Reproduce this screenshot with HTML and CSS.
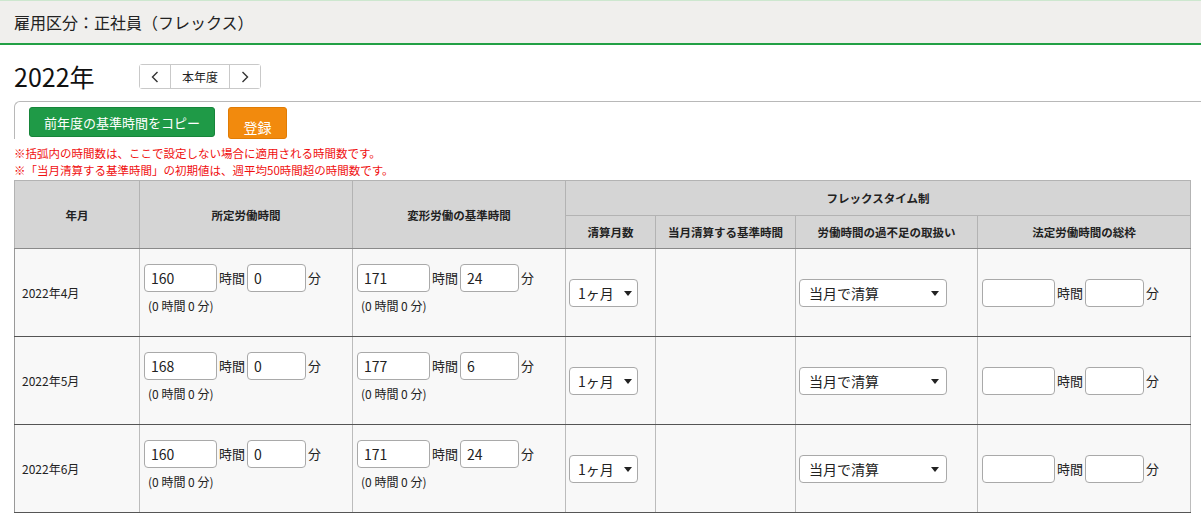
FILE: index.html
```html
<!DOCTYPE html>
<html lang="ja">
<head>
  <meta charset="UTF-8">
  <title>基準時間設定</title>
  <link rel="stylesheet" href="styles.css">
</head>
<body>
  <div class="page-head">
    <h1>雇用区分：正社員（フレックス）</h1>
  </div>

  <div class="year-bar">
    <div class="year-title">2022年</div>
    <div class="year-nav">
      <button class="nav-btn nav-arrow" type="button">
        <svg width="8" height="12" viewBox="0 0 8 12"><polyline points="6.5,1 1.5,6 6.5,11" fill="none" stroke="#333" stroke-width="1.4"/></svg>
      </button>
      <button class="nav-btn nav-current" type="button">本年度</button>
      <button class="nav-btn nav-arrow" type="button">
        <svg width="8" height="12" viewBox="0 0 8 12"><polyline points="1.5,1 6.5,6 1.5,11" fill="none" stroke="#333" stroke-width="1.4"/></svg>
      </button>
    </div>
  </div>

  <div class="panel">
    <button class="btn btn-copy" type="button">前年度の基準時間をコピー</button>
    <button class="btn btn-save" type="button">登録</button>
  </div>

  <div class="notes">
    ※括弧内の時間数は、ここで設定しない場合に適用される時間数です。<br>
    ※「当月清算する基準時間」の初期値は、週平均50時間超の時間数です。
  </div>

  <table class="hours-table">
    <colgroup>
      <col style="width:125px">
      <col style="width:213px">
      <col style="width:213px">
      <col style="width:90px">
      <col style="width:140px">
      <col style="width:182px">
      <col style="width:213px">
    </colgroup>
    <thead>
      <tr class="head-top">
        <th rowspan="2">年月</th>
        <th rowspan="2">所定労働時間</th>
        <th rowspan="2">変形労働の基準時間</th>
        <th colspan="4">フレックスタイム制</th>
      </tr>
      <tr class="head-sub">
        <th>清算月数</th>
        <th>当月清算する基準時間</th>
        <th>労働時間の過不足の取扱い</th>
        <th>法定労働時間の総枠</th>
      </tr>
    </thead>
    <tbody>
      <tr>
        <td class="month">2022年4月</td>
        <td>
          <div class="time-row"><input class="in-h" type="text" value="160"><span class="unit">時間</span><input class="in-m" type="text" value="0"><span class="unit">分</span></div>
          <div class="default">(0 時間 0 分)</div>
        </td>
        <td>
          <div class="time-row"><input class="in-h" type="text" value="171"><span class="unit">時間</span><input class="in-m" type="text" value="24"><span class="unit">分</span></div>
          <div class="default">(0 時間 0 分)</div>
        </td>
        <td class="pick"><span class="select select-months"><select><option>1ヶ月</option></select></span></td>
        <td></td>
        <td class="pick"><span class="select select-mode"><select><option>当月で清算</option></select></span></td>
        <td>
          <div class="time-row"><input class="in-h" type="text"><span class="unit">時間</span><input class="in-m" type="text"><span class="unit">分</span></div>
        </td>
      </tr>
      <tr>
        <td class="month">2022年5月</td>
        <td>
          <div class="time-row"><input class="in-h" type="text" value="168"><span class="unit">時間</span><input class="in-m" type="text" value="0"><span class="unit">分</span></div>
          <div class="default">(0 時間 0 分)</div>
        </td>
        <td>
          <div class="time-row"><input class="in-h" type="text" value="177"><span class="unit">時間</span><input class="in-m" type="text" value="6"><span class="unit">分</span></div>
          <div class="default">(0 時間 0 分)</div>
        </td>
        <td class="pick"><span class="select select-months"><select><option>1ヶ月</option></select></span></td>
        <td></td>
        <td class="pick"><span class="select select-mode"><select><option>当月で清算</option></select></span></td>
        <td>
          <div class="time-row"><input class="in-h" type="text"><span class="unit">時間</span><input class="in-m" type="text"><span class="unit">分</span></div>
        </td>
      </tr>
      <tr>
        <td class="month">2022年6月</td>
        <td>
          <div class="time-row"><input class="in-h" type="text" value="160"><span class="unit">時間</span><input class="in-m" type="text" value="0"><span class="unit">分</span></div>
          <div class="default">(0 時間 0 分)</div>
        </td>
        <td>
          <div class="time-row"><input class="in-h" type="text" value="171"><span class="unit">時間</span><input class="in-m" type="text" value="24"><span class="unit">分</span></div>
          <div class="default">(0 時間 0 分)</div>
        </td>
        <td class="pick"><span class="select select-months"><select><option>1ヶ月</option></select></span></td>
        <td></td>
        <td class="pick"><span class="select select-mode"><select><option>当月で清算</option></select></span></td>
        <td>
          <div class="time-row"><input class="in-h" type="text"><span class="unit">時間</span><input class="in-m" type="text"><span class="unit">分</span></div>
        </td>
      </tr>
    </tbody>
  </table>
</body>
</html>
```

FILE: styles.css
```css
body { margin: 0; background: #fff; color: #222; font-family: "Noto Sans CJK JP", "Noto Sans", sans-serif; overflow: hidden; }

/* page header */
.page-head { background: #f0efed; border-top: 1px solid #cde7cf; border-bottom: 2px solid #22a045; height: 42px; }
.page-head h1 { margin: 0; padding-left: 14px; font-size: 16px; font-weight: normal; line-height: 42px; color: #222; }

/* year + navigation */
.year-bar { display: flex; align-items: center; margin-top: 19px; padding-left: 14px; height: 25px; }
.year-title { width: 125px; font-size: 25px; line-height: 25px; color: #111; }
.year-nav { display: flex; border: 1px solid #c9c9c9; border-radius: 3px; height: 23px; }
.nav-btn { background: #fff; border: none; margin: 0; padding: 0; font-family: inherit; font-size: 12px; color: #222; display: flex; align-items: center; justify-content: center; cursor: pointer; }
.nav-arrow { width: 30px; }
.nav-current { width: 60px; border-left: 1px solid #c9c9c9; border-right: 1px solid #c9c9c9; }

/* action buttons */
.panel { margin: 12px 0 0 14px; border-top: 1px solid #b8b8b8; border-left: 1px solid #b8b8b8; border-top-left-radius: 6px; padding: 5px 0 0 14px; display: flex; align-items: flex-start; gap: 13px; }
.btn { border-radius: 3px; color: #fff; font-family: inherit; font-size: 13px; cursor: pointer; }
.btn-copy { background: #1f9a47; border: 1px solid #17853a; height: 30px; width: 186px; padding: 0; }
.btn-save { background: #f28a0d; border: 1px solid #e07c05; height: 32px; width: 59px; padding: 8px 0 0; line-height: 20px; font-size: 14px; }

.notes { margin: 6px 0 0 14px; color: #f01010; font-size: 11.5px; line-height: 17px; }

/* main table */
.hours-table { margin: 1px 0 0 14px; width: 1176px; table-layout: fixed; border-collapse: collapse; font-size: 12px; }
.hours-table th { background: #d5d5d5; border: 1px solid #b3b3b3; font-weight: bold; font-size: 11.5px; color: #222; padding: 0; }
.head-top th { height: 34px; }
.head-sub th { height: 32px; border-top-color: #e4e4e4; }
.hours-table thead tr:last-child th, .hours-table th[rowspan] { border-bottom-color: #8a8a8a; }
.hours-table td { background: #f8f8f8; border-left: 1px solid #bcbcbc; border-right: 1px solid #bcbcbc; border-bottom: 1px solid #555; height: 87px; padding: 0 0 0 4px; vertical-align: middle; }
.hours-table td:first-child { border-left-color: #999; }
.month { padding-left: 7px !important; font-size: 12px; }

.time-row { display: flex; align-items: center; }
.time-row input { height: 28px; box-sizing: border-box; border: 1px solid #a9a9a9; border-radius: 4px; background: #fff; font-family: inherit; font-size: 14px; padding: 0 6px; color: #222; }
.in-h { width: 73px; }
.in-m { width: 59px; }
.unit { font-size: 13px; margin: 0 2px; }
.default { margin: 6px 0 8px 4px; font-size: 12px; line-height: 16px; }

/* selects with drawn arrow */
.pick { padding-left: 3px !important; }
.select { position: relative; display: inline-block; vertical-align: middle; }
.select select { appearance: none; -webkit-appearance: none; height: 28px; border: 1px solid #a9a9a9; border-radius: 4px; background: #fff; font-family: inherit; font-size: 14px; color: #222; padding: 0 0 0 8px; }
.select::after { content: ""; position: absolute; top: 12px; border-left: 4px solid transparent; border-right: 4px solid transparent; border-top: 5px solid #222; pointer-events: none; }
.select-months select { width: 69px; }
.select-months::after { left: 55px; }
.select-mode select { width: 148px; padding-left: 9px; }
.select-mode::after { left: 132px; }
```
